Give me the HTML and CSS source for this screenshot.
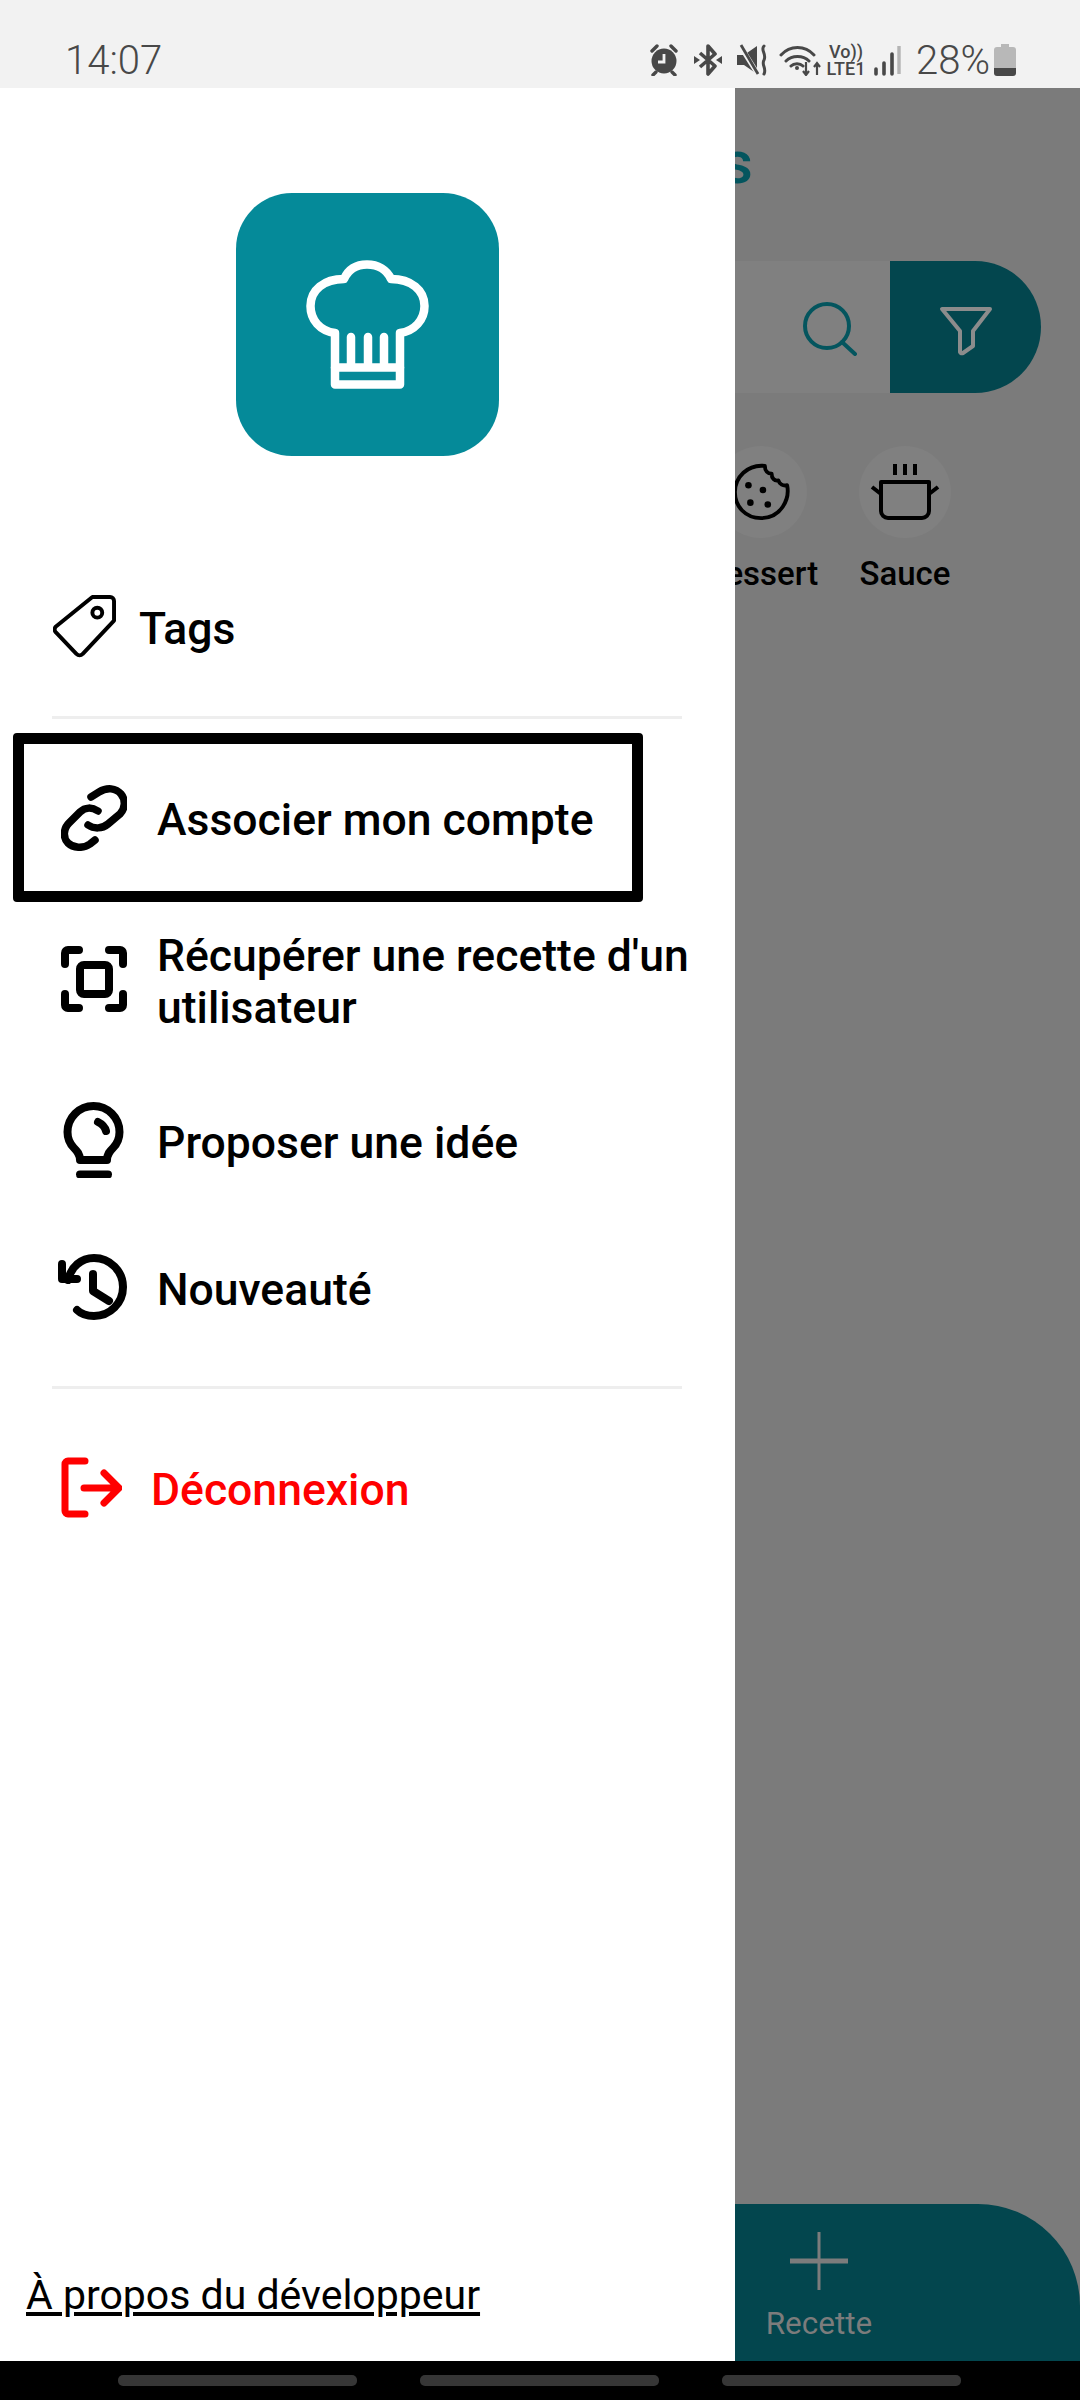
FILE: index.html

```html
<!DOCTYPE html>
<html lang="fr">
<head>
  <meta charset="UTF-8">
  <title>Recettes</title>
  <link rel="stylesheet" href="styles.css">
</head>
<body>
  <header class="status-bar">
    <span class="status-time">14:07</span>
    <div class="status-icons">
      <svg class="st-alarm" viewBox="0 0 30 32"><path d="M3 7 8 2M27 7 22 2" fill="none" stroke="#484848" stroke-width="3.4" stroke-linecap="round"/><circle cx="15" cy="17" r="12.5" fill="#484848"/><path d="M15 10v8h-6" fill="none" stroke="#f2f2f2" stroke-width="2.8"/><path d="M7 28 4 31M23 28l3 3" stroke="#484848" stroke-width="3.4" stroke-linecap="round"/></svg>
      <svg class="st-bt" viewBox="0 0 28 32"><path d="M6 9 21 22l-7 8V2l7 8L6 23" fill="none" stroke="#484848" stroke-width="3.6" stroke-linejoin="round"/><path d="M0 12l6 4-6 4zM28 12l-6 4 6 4z" fill="#484848"/></svg>
      <svg class="st-mute" viewBox="0 0 30 32"><path d="M0 11h7L20 2v28L7 21H0z" fill="#484848"/><path d="M2 0 22 32" stroke="#f2f2f2" stroke-width="5"/><path d="M4 1 21 30" stroke="#484848" stroke-width="2.8"/><path d="M27 2c-4 4 3 8 0 14-3 5 3 8 0 14" fill="none" stroke="#484848" stroke-width="3" stroke-linecap="round"/></svg>
      <svg class="st-wifi" viewBox="0 0 42 32"><path d="M2 11C11 1 26 1 35 11M7 17c6-6 17-6 23 0M12 22c3-3 9-3 12 0" fill="none" stroke="#484848" stroke-width="3" stroke-linecap="round"/><circle cx="18" cy="24" r="2" fill="#484848"/><path d="M27 18v12M24 27l3 4 3-4M38 31V20M35 23l3-4 3 4" fill="none" stroke="#484848" stroke-width="2.2"/></svg>
      <span class="st-volte">Vo))<br>LTE1</span>
      <svg class="st-signal" viewBox="0 0 27 32"><path d="M2 30v-5M10 30V19M18 30V10" stroke="#484848" stroke-width="3.6" stroke-linecap="round"/><path d="M25 30V2" stroke="#b4b4b4" stroke-width="3.4"/></svg>
      <span class="status-pct">28%</span>
      <svg class="st-battery" viewBox="0 0 22 32"><path d="M7 0h8v3h4a3 3 0 0 1 3 3v20H0V6a3 3 0 0 1 3-3h4z" fill="#b8b8b8"/><path d="M0 24h22v5a3 3 0 0 1-3 3H3a3 3 0 0 1-3-3z" fill="#484848"/></svg>
    </div>
  </header>

  <main class="screen">
    <nav class="drawer">
      <div class="logo">
        <svg class="logo-hat" viewBox="0 0 123 129" fill="none" stroke="#fff" stroke-width="8.5" stroke-linejoin="round" stroke-linecap="round">
          <path d="M29 73C14 71 4.500 60 4.500 46 4.500 30 18 19 38 19 42 10 50 4.500 61 4.500s20 5.500 24 14.500c20 0 33.500 11 33.500 27 0 14-10 25-24.500 27v51.500H29z"/>
          <path d="M29 107.500h65M45 77v30M62 77v30M78 77v30"/>
        </svg>
      </div>

      <a class="menu-item item-tags">
        <svg class="icon-tag" viewBox="0 0 64 64" fill="none" stroke="#000" stroke-width="4" stroke-linejoin="round"><path d="M40 2h18a4 4 0 0 1 4 4v20L30 60a4 4 0 0 1-6 0L3 38a4 4 0 0 1 0-6z"/><circle cx="45" cy="18" r="5"/></svg>
        <span>Tags</span>
      </a>
      <hr class="divider divider-top">

      <a class="menu-item item-boxed">
        <svg class="icon" viewBox="0 0 66 66" fill="none" stroke="#000" stroke-width="7.5" stroke-linecap="round"><path d="M30 12 38 7C46 2 55 3 60 9 65 15 64 24 59 29L47 39C41 44 33 44 27 40"/><path d="M37 26C31 22 24 22 19 27L8 38C2 44 2 53 7 58 12 63 22 64 29 59L34 55"/></svg>
        <span>Associer mon compte</span>
      </a>

      <a class="menu-item item-double">
        <svg class="icon" viewBox="0 0 66 66" fill="none" stroke="#000" stroke-width="8" stroke-linecap="round" stroke-linejoin="round"><path d="M4 18V7a3 3 0 0 1 3-3h11M48 4h11a3 3 0 0 1 3 3v11M62 48v11a3 3 0 0 1-3 3H48M18 62H7a3 3 0 0 1-3-3V48"/><rect x="19" y="19" width="29" height="29" rx="4"/></svg>
        <span>Récupérer une recette d'un utilisateur</span>
      </a>

      <a class="menu-item item-idea">
        <svg class="icon" viewBox="0 0 66 76" fill="none" stroke="#000" stroke-width="8" stroke-linecap="round" stroke-linejoin="round"><path d="M19 58c0-6-3-9-6-12C8 41 6.500 36 6.500 30a26 26 0 0 1 52 0c0 6-1.500 11-6.500 16-3 3-6 6-6 12z"/><path d="M37 20c4 2 7 5 8 9"/><path d="M19 72.500h28"/></svg>
        <span>Proposer une idée</span>
      </a>

      <a class="menu-item item-news">
        <svg class="icon icon-history" viewBox="0 0 69 66" fill="none" stroke="#000" stroke-width="8" stroke-linecap="round" stroke-linejoin="round"><path d="M10 26C13 13 23 4 36 4c16 0 29 13 29 29S52 62 36 62c-7 0-13-2-17-6"/><path d="M4 10v15h15"/><path d="M35 20v17l16 10"/></svg>
        <span>Nouveauté</span>
      </a>
      <hr class="divider divider-bottom">

      <a class="menu-item item-logout">
        <svg class="icon-logout" viewBox="0 0 61 61" fill="none" stroke="#f00" stroke-width="7" stroke-linecap="round" stroke-linejoin="round"><path d="M24 4H7a3 3 0 0 0-3 3v47a3 3 0 0 0 3 3h17"/><path d="M23 31h34M43 16l15 15-15 15"/></svg>
        <span>Déconnexion</span>
      </a>

      <a class="about">À propos du développeur</a>
    </nav>

    <section class="behind">
      <h1 class="behind-title">Recettes</h1>
      <div class="search-row">
        <div class="search-field">
          <svg class="search-icon" viewBox="0 0 54 54" fill="none" stroke="#04555e" stroke-width="4" stroke-linecap="round"><circle cx="24" cy="24" r="22"/><path d="M39 40 52 52"/></svg>
        </div>
        <div class="filter-btn">
          <svg class="filter-icon" viewBox="0 0 54 50" fill="none" stroke="#8c8c8c" stroke-width="4" stroke-linejoin="round"><path d="M3 3h48L34 25v15l-10 7a2 2 0 0 1-3-1V25z"/></svg>
        </div>
      </div>
      <div class="categories">
        <div class="category">
          <div class="category-circle">
            <svg class="category-icon" viewBox="0 0 60 60"><path d="M34 3c0 5 3 8 7 8 0 5 3 8 7 7 1 4 5 6 9 5 3 14-6 34-27 34C14 57 3 45 3 30 3 15 16 1 34 3z" fill="none" stroke="#000" stroke-width="4" stroke-linejoin="round"/><circle cx="17" cy="23" r="3.400"/><circle cx="32" cy="28" r="3.400"/><circle cx="19" cy="41" r="3.400"/><circle cx="37" cy="43" r="3.400"/></svg>
          </div>
          <span>Dessert</span>
        </div>
        <div class="category">
          <div class="category-circle">
            <svg class="category-icon category-pot" viewBox="0 0 70 58" fill="none" stroke="#000" stroke-width="4" stroke-linejoin="round"><path d="M11 19h48v29a7 7 0 0 1-7 7H18a7 7 0 0 1-7-7zM2 24l9 7M68 24l-9 7"/><path d="M25 1v11M35 1v11M45 1v11"/></svg>
          </div>
          <span>Sauce</span>
        </div>
      </div>
      <div class="tab-bar">
        <svg class="tab-plus" viewBox="0 0 58 58" fill="none" stroke="#7c7c7c"><path d="M29 0v58" stroke-width="3"/><path d="M0 29h58" stroke-width="5"/></svg>
        <span>Recette</span>
      </div>
    </section>
  </main>

  <footer class="nav-bar">
    <span class="nav-pill"></span>
    <span class="nav-pill"></span>
    <span class="nav-pill"></span>
  </footer>
</body>
</html>
```

FILE: styles.css

```css
* {
  box-sizing: border-box;
}
body {
  margin: 0;
  width: 1080px;
  height: 2400px;
  display: flex;
  flex-direction: column;
  overflow: hidden;
  font-family: Roboto, Arial, sans-serif;
  background: #000;
}

/* status bar */
.status-bar {
  height: 88px;
  flex: none;
  background: #f2f2f2;
  color: #484848;
  display: flex;
  justify-content: space-between;
  align-items: flex-start;
  padding: 39px 64px 0 65px;
}
.status-time {
  font-size: 40px;
  font-weight: 300;
  line-height: 44px;
}
.status-icons {
  display: flex;
  align-items: center;
  height: 42px;
}
.status-icons svg {
  height: 32px;
  flex: none;
}
.st-alarm { width: 30px; }
.st-bt { width: 28px; margin-left: 15px; }
.st-mute { width: 30px; margin-left: 15px; }
.st-wifi { width: 42px; margin-left: 12px; }
.st-volte {
  width: 40px;
  margin-left: 5px;
  font-size: 18px;
  font-weight: 500;
  line-height: 17px;
  text-align: center;
}
.st-signal { width: 27px; margin-left: 8px; }
.status-pct {
  font-size: 40px;
  font-weight: 300;
  margin-left: 15px;
  width: 78px;
}
.st-battery { width: 22px; }

/* main area */
.screen {
  flex: 1;
  display: flex;
  min-height: 0;
}

/* drawer */
.drawer {
  width: 735px;
  flex: none;
  background: #fff;
  display: flex;
  flex-direction: column;
}
.logo {
  width: 263px;
  height: 263px;
  flex: none;
  margin: 105px 0 0 236px;
  background: #058a99;
  border-radius: 56px;
  display: flex;
  align-items: center;
  justify-content: center;
}
.logo-hat {
  width: 123px;
  height: 129px;
}
.menu-item {
  display: flex;
  align-items: center;
  flex: none;
  color: #000;
  font-size: 44.5px;
  font-weight: 500;
  line-height: 52px;
  height: 80px;
  padding-left: 61px;
  gap: 30px;
}
.menu-item span {
  margin-top: 5px;
}
.icon {
  width: 66px;
  flex: none;
}
.icon-history {
  width: 69px;
  margin-left: -3px;
}
.item-tags {
  height: 100px;
  margin-top: 120px;
  padding-left: 53px;
  gap: 23px;
}
.icon-tag {
  width: 63px;
  height: 63px;
}
.divider {
  flex: none;
  width: 630px;
  height: 3px;
  margin: 0 0 0 52px;
  border: 0;
  background: #eee;
}
.divider-top { margin-top: 40px; }
.divider-bottom { margin-top: 59px; }
.item-boxed {
  width: 630px;
  height: 169px;
  margin: 14px 0 0 13px;
  padding-left: 37px;
  border: 11px solid #000;
  border-radius: 4px;
}
.item-double {
  height: 104px;
  margin-top: 25px;
  padding-right: 26px;
}
.item-idea { margin-top: 69px; }
.item-news { margin-top: 67px; }
.item-logout {
  margin-top: 58px;
  gap: 29px;
  color: #f00;
}
.icon-logout {
  width: 61px;
  height: 61px;
  flex: none;
}
.about {
  margin: auto 0 40px 26px;
  font-size: 41px;
  line-height: 52px;
  color: #000;
  text-decoration: underline;
}

/* app behind the scrim */
.behind {
  flex: 1;
  min-width: 0;
  overflow: hidden;
  background: #7b7b7b;
  display: flex;
  flex-direction: column;
}
.behind-title {
  margin: 40px 0 0;
  height: 70px;
  flex: none;
  padding-right: 327px;
  display: flex;
  justify-content: flex-end;
  font-size: 60px;
  line-height: 70px;
  font-weight: 500;
  color: #04555e;
  white-space: nowrap;
}
.search-row {
  display: flex;
  height: 132px;
  margin: 63px 39px 0 0;
  flex: none;
}
.search-field {
  flex: 1;
  background: #808080;
  display: flex;
  align-items: center;
  justify-content: flex-end;
  padding-right: 33px;
}
.search-icon {
  width: 54px;
  height: 54px;
  margin-top: 3px;
}
.filter-btn {
  width: 151px;
  background: #03464e;
  border-radius: 0 66px 66px 0;
  display: flex;
  align-items: center;
  justify-content: center;
}
.filter-icon {
  width: 54px;
  height: 50px;
  margin-top: 8px;
}
.categories {
  display: flex;
  justify-content: flex-end;
  gap: 32px;
  padding-right: 119px;
  margin-top: 53px;
  flex: none;
}
.category {
  width: 112px;
  flex: none;
  display: flex;
  flex-direction: column;
  align-items: center;
  font-size: 33px;
  font-weight: 500;
  line-height: 36px;
  color: #000;
}
.category-circle {
  width: 92px;
  height: 92px;
  border-radius: 50%;
  background: #808080;
  display: flex;
  align-items: center;
  justify-content: center;
  margin-bottom: 18px;
}
.category-icon {
  width: 58px;
  height: 58px;
}
.category-pot {
  width: 70px;
  flex: none;
}
.tab-bar {
  margin-top: auto;
  height: 157px;
  flex: none;
  background: #03464e;
  border-top-right-radius: 102px;
  color: #7c7c7c;
  font-size: 31.5px;
  line-height: 36px;
  display: flex;
  flex-direction: column;
  align-items: center;
  padding: 28px 177px 0 0;
  gap: 16px;
}
.tab-plus {
  width: 58px;
  height: 58px;
}

/* android nav */
.nav-bar {
  height: 39px;
  flex: none;
  background: #000;
  display: flex;
  padding: 14px 0 0 118px;
  gap: 63px;
}
.nav-pill {
  width: 239px;
  height: 11px;
  border-radius: 5px;
  background: #363636;
}
```
